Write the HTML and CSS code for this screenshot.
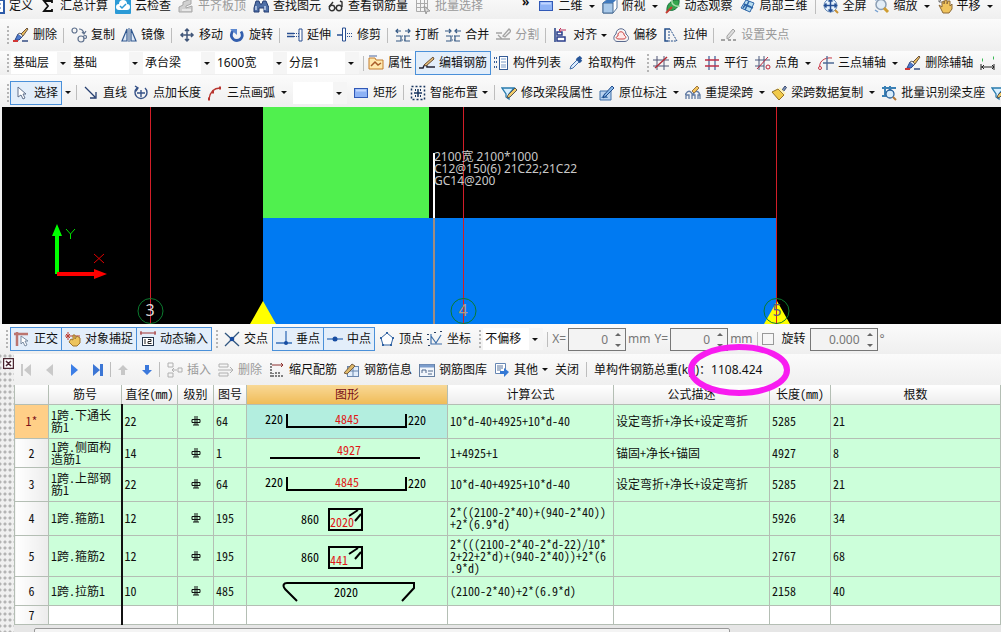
FILE: index.html
```html
<!DOCTYPE html>
<html lang="zh-CN">
<head>
<meta charset="utf-8">
<title>钢筋编辑</title>
<link rel="stylesheet" href="styles.css">
</head>
<body>
<svg class="sprite" aria-hidden="true">
  <symbol id="doc" viewBox="0 0 16 16"><rect x="2" y="2" width="13" height="13" fill="#fff" stroke="#2c5aa8" stroke-width="2"/><path d="M5 6h7M5 10h7" stroke="#2c5aa8"/></symbol>
  <symbol id="sigma" viewBox="0 0 16 16"><path d="M12 5V3H4l4 5-4 5h8v-2" fill="none" stroke="#111" stroke-width="1.8"/></symbol>
  <symbol id="cloud" viewBox="0 0 16 16"><rect width="16" height="16" rx="1" fill="#2b9ad6"/><path d="M4 12a3 3 0 0 1 0-6 4 4 0 0 1 8 0 3 3 0 0 1 0 6z" fill="#fff"/><path d="M5 8l2 2 4-4" fill="none" stroke="#2b9ad6" stroke-width="1.5"/></symbol>
  <symbol id="slab" viewBox="0 0 16 16"><path d="M1 14V9l4-2V4l8-3v5l-5 2v2l6-2v6z" fill="#d0d0d0" stroke="#a6a6a6"/><path d="M4 12h9" stroke="#fff"/></symbol>
  <symbol id="bino" viewBox="0 0 16 16"><path d="M3 3h3l1 3h2l1-3h3l3 7v4h-5v-4H6v4H1v-4z" fill="#4f6fa6" stroke="#243d73"/><path d="M3 8v4M12 8v4" stroke="#c4d4ee" stroke-width="1.5"/></symbol>
  <symbol id="glasses" viewBox="0 0 16 16"><g fill="none" stroke="#333" stroke-width="1.4"><circle cx="4" cy="10" r="2.7"/><circle cx="11" cy="10" r="2.7"/><path d="M1 9l4-5M14 9V4l-2-1M7 10h1"/></g></symbol>
  <symbol id="batch" viewBox="0 0 16 16"><g fill="none" stroke="#ababab"><path d="M1.500 1.500h11v12h-11zM1 5.500h12M1 9.500h12M5.500 1v12M9.500 1v12"/></g><path d="M9 8l6 5-3 .3-1 2.700z" fill="#ddd" stroke="#999"/></symbol>
  <symbol id="rect" viewBox="0 0 16 16"><rect x="1.500" y="3.500" width="13" height="9" fill="#8eb2f5" stroke="#3159b7"/><path d="M3 5.500h10" stroke="#c2d6ff" stroke-width="2"/></symbol>
  <symbol id="cube" viewBox="0 0 16 16"><path d="M1 5l5-4h9v9l-4 5H1z" fill="#fff" stroke="#52749c"/><path d="M1 5h10v10H1z" fill="#a9c9e9" stroke="#456990"/><path d="M1 5l5-4h9l-4 4z" fill="#3f79bd"/></symbol>
  <symbol id="orbit" viewBox="0 0 16 16"><path d="M2 13C1 6 7 1 14 2c1 6-4 12-10 10z" fill="#35a64d" stroke="#17723c"/><path d="M7 2c-1 4 3 7 8 6" fill="none" stroke="#aadfae" stroke-width="1.5"/><path d="M1 15l6-6" stroke="#c33b32" stroke-width="2"/></symbol>
  <symbol id="local3d" viewBox="0 0 16 16"><path d="M1 10l5-8 8 3-4 9z" fill="#b7dcef" stroke="#2e65a7"/><path d="M4 6l7 3M9 3l-4 9M3 10l2-3 8 3" fill="none" stroke="#2e65a7" stroke-width="1.5"/></symbol>
  <symbol id="full" viewBox="0 0 16 16"><circle cx="7.500" cy="7.500" r="6.500" fill="#e5f1fc" stroke="#6a8db9"/><path d="M7.500 1v13M1 7.500h13M5.500 3.500l2-2 2 2M5.500 11.500l2 2 2-2M3.500 5.500l-2 2 2 2M11.500 5.500l2 2-2 2" fill="none" stroke="#244e94" stroke-width="1.5"/><path d="M12 12l3 3" stroke="#c99235" stroke-width="2"/></symbol>
  <symbol id="zoom" viewBox="0 0 16 16"><circle cx="7" cy="6.500" r="5" fill="#e2edf7" stroke="#8b9eb4" stroke-width="1.500"/><path d="M10 10l4 4" stroke="#cf9d31" stroke-width="3"/><path d="M1 2l3-1M1 12l3 2" stroke="#76a1d2" stroke-width="1.500"/></symbol>
  <symbol id="hand" viewBox="0 0 16 16"><path d="M2 7l3 2V4l2-1v3l1-4h2v4l1-3h2v5l2-2v5l-3 4H6z" fill="#efc35c" stroke="#8c6937"/><path d="M2 4l3-3M2 1v3h3" fill="none" stroke="#777"/></symbol>
  <symbol id="brush" viewBox="0 0 16 16"><path d="M14 1l1 1-5 7-2-2z" fill="#e8ba5b" stroke="#6d5640"/><path d="M5 7l4 3-3 3H2z" fill="#4f7ccd" stroke="#284487"/><path d="M5 7l2-1 3 3-1 1" fill="#eee" stroke="#666"/><path d="M0 14h5" stroke="#d13636" stroke-width="2"/><path d="M9 14h6" stroke="#354c83" stroke-width="1.5"/></symbol>
  <symbol id="copy" viewBox="0 0 16 16"><g fill="none" stroke="#61738f" stroke-width="1.2"><circle cx="3.500" cy="3.500" r="2.500"/><circle cx="10" cy="12" r="3"/><circle cx="14" cy="10" r="1.500"/><path d="M8 2c3 0 4 1 5 4m-2-1l2 2 2-3"/></g></symbol>
  <symbol id="mirror" viewBox="0 0 16 16"><path d="M6 2v12H1zM10 2v12h5z" fill="#dfe9f6" stroke="#31588f" stroke-width="1.200"/><path d="M8 1v14" stroke="#31588f"/></symbol>
  <symbol id="move" viewBox="0 0 16 16"><path d="M8 2v12M2 8h12M6 4l2-2 2 2M6 12l2 2 2-2M4 6L2 8l2 2M12 6l2 2-2 2" fill="none" stroke="#405679" stroke-width="1.500"/></symbol>
  <symbol id="rotate" viewBox="0 0 16 16"><path d="M4 3.500C0 9 4 13.500 8 13.500S15 9 12 4.500" fill="none" stroke="#345fae" stroke-width="2.800"/><path d="M1 2h7v6z" fill="#5d89d0"/></symbol>
  <symbol id="extend" viewBox="0 0 16 16"><path d="M0 6.500h7M0 9.500h7" stroke="#294f91" stroke-width="1.500"/><path d="M7 6.500h5M7 9.500h5" stroke="#294f91" stroke-dasharray="1 1"/><path d="M12 2h3v12h-3z" fill="#fff" stroke="#294f91"/></symbol>
  <symbol id="trim" viewBox="0 0 16 16"><path d="M0 8h5" stroke="#294f91" stroke-width="1.500"/><path d="M10 6.500h6M10 9.500h6" stroke="#294f91" stroke-dasharray="1 1"/><path d="M5.500 1v13h3V1z" fill="#fff" stroke="#294f91"/></symbol>
  <symbol id="break" viewBox="0 0 16 16"><path d="M1 4h5M10 4h5M3 2L1 4l2 2M13 2l2 2-2 2M1 9h5v5H1M15 9h-5v5h5" fill="none" stroke="#355984" stroke-width="1.200"/><path d="M7 9h3M7 13h3" stroke="#355984" stroke-dasharray="1 1"/></symbol>
  <symbol id="join" viewBox="0 0 16 16"><path d="M0 4h5M11 4h5M4 2l2 2-2 2M12 2l-2 2 2 2M1 9h5v5H1M15 9h-5v5h5" fill="none" stroke="#355984" stroke-width="1.200"/><path d="M7 9h3M7 13h3" stroke="#355984" stroke-dasharray="1 1"/></symbol>
  <symbol id="split" viewBox="0 0 16 16"><path d="M1 6h6M1 12h14M3 8l4 4M8 9l6-7 2 2-6 6z" fill="none" stroke="#a4a4a4" stroke-width="1.300"/></symbol>
  <symbol id="align" viewBox="0 0 16 16"><path d="M2 1v14" stroke="#233f84" stroke-width="1.500"/><path d="M4 5h5v3H4zM4 10h8v4H4z" fill="#fff" stroke="#293d8b" stroke-width="1.500"/><path d="M13 3H6m2-2L6 3l2 2" fill="none" stroke="#bd2d58"/></symbol>
  <symbol id="offset" viewBox="0 0 16 16"><path d="M5 9V7c1-3 5-3 6 0v1c3 2 2 4-1 4H6c-3 0-4-2-1-3z" fill="#ffe9e9" stroke="#c44"/><path d="M3 7c0-7 10-7 10 0 4 3 3 7-1 7.500H4C0 14 0 9 3 7z" fill="none" stroke="#59698e"/></symbol>
  <symbol id="stretch" viewBox="0 0 16 16"><path d="M7 2H2v12h3" fill="none" stroke="#254f8a" stroke-width="1.500"/><path d="M7 2l7 12H5M6 4v9" fill="none" stroke="#254f8a" stroke-dasharray="2 1"/></symbol>
  <symbol id="gripset" viewBox="0 0 16 16"><path d="M6 9l6-7 2 2-6 7-2 1z" fill="#ddd" stroke="#a2a2a2"/><path d="M0 13h4M7 13h3M12 13h3" stroke="#a2a2a2" stroke-width="2"/></symbol>
  <symbol id="prop" viewBox="0 0 16 16"><path d="M1 3h6l1 2h7v9H1z" fill="#ffe9ae" stroke="#c37d2f"/><path d="M3 11l4-4 3 3 3-2" fill="none" stroke="#a95c2a" stroke-width="1.500"/><path d="M1 1h8" stroke="#4a679d"/></symbol>
  <symbol id="editbar" viewBox="0 0 16 16"><path d="M0 13h4c1-4 4-4 4-1h8" fill="none" stroke="#223" stroke-width="1.500"/><path d="M5 10l9-8 1 2-8 7z" fill="#e6be76" stroke="#654c35"/></symbol>
  <symbol id="list" viewBox="0 0 16 16"><path d="M1 3h3M1 7h3M1 12h3" stroke="#345b96" stroke-width="2" stroke-dasharray="1 1"/><rect x="6.500" y="1.500" width="8" height="13" fill="#fff" stroke="#345b96"/><path d="M8 4h5M8 7h5M8 10h5M8 12h5" stroke="#7699c7"/></symbol>
  <symbol id="dropper" viewBox="0 0 16 16"><path d="M3 11l7-7 2 2-7 7-3 1z" fill="#dcecff" stroke="#4470a9"/><path d="M9 3l4 4M11 4l2-2" stroke="#285699" stroke-width="3.500"/></symbol>
  <symbol id="twopt" viewBox="0 0 16 16"><path d="M4 1v14M11 1v14M0 5h16M0 11h16" stroke="#4f5574"/><path d="M2 13L14 2" stroke="#b32d38" stroke-width="1.500"/></symbol>
  <symbol id="parallel" viewBox="0 0 16 16"><path d="M5 1v14M11 1v14" stroke="#4a649b" stroke-width="1.300"/><path d="M1 5h14M1 11h14" stroke="#bd2e47" stroke-width="1.300"/></symbol>
  <symbol id="angle" viewBox="0 0 16 16"><path d="M4 1v14M9 1v14M0 5h15M0 11h9" stroke="#4a587c"/><path d="M2 14L13 2" stroke="#bb263b"/><circle cx="13" cy="12" r="2" fill="none" stroke="#bb263b"/></symbol>
  <symbol id="arcaxis" viewBox="0 0 16 16"><path d="M2 14C0 7 6 2 14 3" fill="none" stroke="#c73745"/><circle cx="2" cy="13" r="1.500" fill="#fff" stroke="#c73745"/><path d="M9 1v14M5 8h11" stroke="#4d6995" stroke-width="1.300"/></symbol>
  <symbol id="dim" viewBox="0 0 16 16"><path d="M1 9v6M14 9v6M1 12h13M4 10l-2 2 2 2M12 10l2 2-2 2" fill="none" stroke="#222"/><path d="M2 5h1M13 3h1" stroke="#3bbb55" stroke-width="3"/></symbol>
  <symbol id="cursor" viewBox="0 0 16 16"><path d="M4 2v10l3-2 2 4 2-1-2-4h3z" fill="#fff" stroke="#60718d"/></symbol>
  <symbol id="line" viewBox="0 0 16 16"><path d="M2 2l10 10M13 7v6H7" fill="none" stroke="#263f70" stroke-width="1.300"/></symbol>
  <symbol id="ptlen" viewBox="0 0 16 16"><path d="M4 3a6 6 0 1 0 8 0M8 5v7M4 8h8M2 1l3 2-2 3" fill="none" stroke="#355187" stroke-width="1.400"/></symbol>
  <symbol id="arc" viewBox="0 0 16 16"><path d="M2 14C3 8 6 3 13 3" fill="none" stroke="#b8352f" stroke-width="1.300"/><path d="M1 14h2M5 7h2M12 3h2" stroke="#b8352f" stroke-width="3"/></symbol>
  <symbol id="smart" viewBox="0 0 16 16"><rect x="1.500" y="1.500" width="13" height="13" fill="none" stroke="#193660" stroke-width="1.500" stroke-dasharray="2 2"/><path d="M8 4v8M4 8h8" stroke="#193660" stroke-width="1.500"/><path d="M5 5h1M10 5h1M5 11h1M10 11h1" stroke="#193660" stroke-width="2"/></symbol>
  <symbol id="modprop" viewBox="0 0 16 16"><path d="M1 3h12l-5 6v5l-3-2V9z" fill="#d6efff" stroke="#287bad" stroke-width="1.300"/><path d="M7 10l7-7 2 2-7 7-3 1z" fill="#f1cb68" stroke="#555"/></symbol>
  <symbol id="origin" viewBox="0 0 16 16"><path d="M1 6h11v9H1z" fill="#b9d2ee" stroke="#3e70ab"/><path d="M2 13l4-5 3 5" fill="#477db7"/><path d="M5 10l8-9 2 2-8 8-3 2z" fill="#89b9e9" stroke="#1f4a89"/></symbol>
  <symbol id="respan" viewBox="0 0 16 16"><path d="M1 14v-4h3v4M7 14v-4h3v4M13 14v-4h2v4M0 10c3-5 5-5 8 0M8 10c2-5 5-5 7 0" fill="none" stroke="#617ba4" stroke-width="1.300"/><path d="M7 6l5-5 2 2-5 5z" fill="#f4c55e" stroke="#9d7640"/></symbol>
  <symbol id="paint" viewBox="0 0 16 16"><path d="M11 5l3-4 1.500 1.500-3 4z" fill="#7c93ba" stroke="#3c4b6e"/><path d="M7 4l6 6-5 5-7-8z" fill="#f1ca4a" stroke="#947021"/><path d="M8 3l6 6" stroke="#fff3b4" stroke-width="2"/></symbol>
  <symbol id="recog" viewBox="0 0 16 16"><path d="M1 3h14M3 7h10M4 1v10M9 1v5M1 11h5" stroke="#3b81b6" stroke-width="2"/><circle cx="9" cy="9" r="4" fill="#d7ecfb" stroke="#28619c" stroke-width="1.300"/><path d="M12 12l3 3" stroke="#b17737" stroke-width="2"/></symbol>
  <symbol id="ortho" viewBox="0 0 16 16"><path d="M0 3h14M3 1v14" stroke="#bb7570" stroke-width="2.500"/><path d="M7 5v8l2-2 2 4 2-1-2-4h3z" fill="#fff" stroke="#7a8ca2"/></symbol>
  <symbol id="snap" viewBox="0 0 16 16"><path d="M0 5h15M3 1v8M1 3l4 4M5 3L1 7" stroke="#bd3c32"/><path d="M6 8l2 1V4h2v4l2-3 3 2v5l-3 3H8l-4-4z" fill="#edc45d" stroke="#9f742e"/></symbol>
  <symbol id="dynin" viewBox="0 0 16 16"><path d="M0 2h16M1 0v4M15 0v4" stroke="#a43434"/><rect x="2.500" y="6.500" width="11" height="8" fill="#fff" stroke="#26364c"/><path d="M5 8v5M8 8.500h3v2H8v2h3.500" fill="none" stroke="#222"/></symbol>
  <symbol id="cross" viewBox="0 0 16 16"><path d="M1 2l14 13M15 1L1 15" stroke="#31567f" stroke-width="1.300"/><circle cx="8" cy="8" r="2.300" fill="#164aa0"/></symbol>
  <symbol id="perp" viewBox="0 0 16 16"><path d="M10 0v12M0 12h16" stroke="#3970b9" stroke-width="1.300"/><circle cx="10" cy="12" r="2" fill="#174da2"/></symbol>
  <symbol id="mid" viewBox="0 0 16 16"><path d="M0 8h16" stroke="#3970b9" stroke-width="1.300"/><circle cx="8" cy="8" r="2.500" fill="#174da2"/></symbol>
  <symbol id="vertex" viewBox="0 0 16 16"><path d="M8 2l6 5-2 7H4L2 7z" fill="#fff" stroke="#3163a3"/><path d="M7 2h2M1 7h2M13 7h2M3 14h2M11 14h2" stroke="#3163a3" stroke-width="2"/></symbol>
  <symbol id="coord" viewBox="0 0 16 16"><path d="M4 3v10h11M4 5l5 7 5-8" fill="none" stroke="#3e6fa9" stroke-width="1.200"/><path d="M1 3v1M1 8v1M2 14v1M8 1v1M14 0v1" stroke="#263d60" stroke-width="2"/></symbol>
  <symbol id="first" viewBox="0 0 16 16"><path d="M3 2h2v12H3zM13 2v12L6 8z" fill="#c9c9c9"/></symbol>
  <symbol id="prev" viewBox="0 0 16 16"><path d="M11 2v12L4 8z" fill="#c9c9c9"/></symbol>
  <symbol id="next" viewBox="0 0 16 16"><path d="M5 2v12l7-6z" fill="#3c7ee6"/></symbol>
  <symbol id="last" viewBox="0 0 16 16"><path d="M3 2v12l7-6zM10 2h3v12h-3z" fill="#3c76d5"/></symbol>
  <symbol id="up" viewBox="0 0 16 16"><path d="M8 3l5 5h-3v5H6V8H3z" fill="#c7c7c7"/></symbol>
  <symbol id="down" viewBox="0 0 16 16"><path d="M8 13L3 8h3V3h4v5h3z" fill="#3b78db"/></symbol>
  <symbol id="insert" viewBox="0 0 16 16"><path d="M1 1h5v4H1zM1 11h5v4H1zM11 6h4v4h-4zM5 8h5M7 6L5 8l2 2" fill="none" stroke="#b0b0b0"/></symbol>
  <symbol id="remove" viewBox="0 0 16 16"><path d="M1 2h9v3H1zM1 11h9v3H1zM0 8h15M12 5l3 3-3 3" fill="none" stroke="#b0b0b0"/></symbol>
  <symbol id="scale" viewBox="0 0 16 16"><path d="M2 1v14M4 15v-4M7 15V9M10 15v-5M13 15v-3" stroke="#333" stroke-width="1.200" stroke-dasharray="2 1"/><path d="M3 3h11M12 1l2 2-2 2" fill="none" stroke="#8d302e"/></symbol>
  <symbol id="info" viewBox="0 0 16 16"><rect x="3.500" y="4.500" width="11" height="10" fill="#e2eefb" stroke="#6986ad"/><path d="M4 9h10M9 5v9" stroke="#6986ad"/><path d="M0 11l8-9 3 2-8 8z" fill="#dfb96a" stroke="#755d3f"/></symbol>
  <symbol id="lib" viewBox="0 0 16 16"><rect x=".5" y="2.500" width="15" height="12" fill="#f2f6fb" stroke="#657fa1"/><path d="M1 4h14" stroke="#7c9dcc" stroke-width="3"/><path d="M3 11V8h4v3M9 9h5M9 12h4" fill="none" stroke="#50688c"/></symbol>
  <symbol id="other" viewBox="0 0 16 16"><path d="M1.500 1.500h10v10h-10z" fill="#fff" stroke="#6686b3"/><path d="M3 4h6M3 6h6M3 8h4" stroke="#58749d"/><path d="M6 9h4V6l5 4-5 5v-3H6z" fill="#3478d4"/></symbol>
  <symbol id="grade" viewBox="0 0 10 10"><path d="M1 3.500h8v3H1zM4 0v9M6 0v9M2 9h6" fill="none" stroke="#111"/></symbol>
</svg>

<header class="toolbars">
  <div class="bar bar-top">
    <button class="tool"><svg><use href="#doc"/></svg>定义</button>
    <button class="tool"><svg><use href="#sigma"/></svg>汇总计算</button>
    <button class="tool"><svg><use href="#cloud"/></svg>云检查</button>
    <button class="tool off"><svg><use href="#slab"/></svg>平齐板顶</button>
    <button class="tool"><svg><use href="#bino"/></svg>查找图元</button>
    <button class="tool"><svg><use href="#glasses"/></svg>查看钢筋量</button>
    <button class="tool off"><svg><use href="#batch"/></svg>批量选择</button>
    <button class="tool more">»</button>
    <button class="tool drop"><svg><use href="#rect"/></svg>二维</button>
    <button class="tool drop"><svg><use href="#cube"/></svg>俯视</button>
    <button class="tool"><svg><use href="#orbit"/></svg>动态观察</button>
    <button class="tool"><svg><use href="#local3d"/></svg>局部三维</button>
    <i class="sep"></i>
    <button class="tool"><svg><use href="#full"/></svg>全屏</button>
    <button class="tool drop"><svg><use href="#zoom"/></svg>缩放</button>
    <button class="tool drop"><svg><use href="#hand"/></svg>平移</button>
    <button class="tool" aria-label="视图"><svg><use href="#rect"/></svg></button>
  </div>
  <div class="bar bar-edit">
    <i class="grip"></i>
    <button class="tool"><svg><use href="#brush"/></svg>删除</button>
    <i class="sep"></i>
    <button class="tool"><svg><use href="#copy"/></svg>复制</button>
    <button class="tool"><svg><use href="#mirror"/></svg>镜像</button>
    <i class="sep"></i>
    <button class="tool"><svg><use href="#move"/></svg>移动</button>
    <button class="tool"><svg><use href="#rotate"/></svg>旋转</button>
    <i class="sep"></i>
    <button class="tool"><svg><use href="#extend"/></svg>延伸</button>
    <button class="tool"><svg><use href="#trim"/></svg>修剪</button>
    <i class="sep"></i>
    <button class="tool"><svg><use href="#break"/></svg>打断</button>
    <button class="tool"><svg><use href="#join"/></svg>合并</button>
    <button class="tool off"><svg><use href="#split"/></svg>分割</button>
    <i class="sep"></i>
    <button class="tool drop near"><svg><use href="#align"/></svg>对齐</button>
    <button class="tool"><svg><use href="#offset"/></svg>偏移</button>
    <button class="tool"><svg><use href="#stretch"/></svg>拉伸</button>
    <i class="sep"></i>
    <button class="tool off"><svg><use href="#gripset"/></svg>设置夹点</button>
  </div>
  <div class="bar bar-member">
    <i class="grip"></i>
    <div class="combos">
      <span class="combo short"><select aria-label="楼层"><option>基础层</option></select></span>
      <span class="combo"><select aria-label="构件分类"><option>基础</option></select></span>
      <span class="combo"><select aria-label="构件类型"><option>承台梁</option></select></span>
      <span class="combo"><select aria-label="构件"><option>1600宽</option></select></span>
      <span class="combo"><select aria-label="分层"><option>分层1</option></select></span>
    </div>
    <i class="sep"></i>
    <button class="tool"><svg><use href="#prop"/></svg>属性</button>
    <button class="tool on"><svg><use href="#editbar"/></svg>编辑钢筋</button>
    <button class="tool"><svg><use href="#list"/></svg>构件列表</button>
    <button class="tool"><svg><use href="#dropper"/></svg>拾取构件</button>
    <i class="grip spaced"></i>
    <button class="tool"><svg><use href="#twopt"/></svg>两点</button>
    <button class="tool"><svg><use href="#parallel"/></svg>平行</button>
    <button class="tool drop"><svg><use href="#angle"/></svg>点角</button>
    <button class="tool drop"><svg><use href="#arcaxis"/></svg>三点辅轴</button>
    <button class="tool"><svg><use href="#brush"/></svg>删除辅轴</button>
    <button class="tool" aria-label="标注"><svg><use href="#dim"/></svg></button>
  </div>
  <div class="bar bar-draw">
    <i class="grip"></i>
    <button class="tool on drop"><svg><use href="#cursor"/></svg>选择</button>
    <i class="sep"></i>
    <button class="tool"><svg><use href="#line"/></svg>直线</button>
    <button class="tool"><svg><use href="#ptlen"/></svg>点加长度</button>
    <button class="tool drop"><svg><use href="#arc"/></svg>三点画弧</button>
    <span class="combo slim"><select aria-label="画法"><option></option></select></span>
    <button class="tool"><svg><use href="#rect"/></svg>矩形</button>
    <i class="sep"></i>
    <button class="tool drop near"><svg><use href="#smart"/></svg>智能布置</button>
    <i class="sep"></i>
    <button class="tool"><svg><use href="#modprop"/></svg>修改梁段属性</button>
    <button class="tool drop"><svg><use href="#origin"/></svg>原位标注</button>
    <button class="tool drop"><svg><use href="#respan"/></svg>重提梁跨</button>
    <button class="tool drop"><svg><use href="#paint"/></svg>梁跨数据复制</button>
    <button class="tool"><svg><use href="#recog"/></svg>批量识别梁支座</button>
    <button class="tool" aria-label="过滤"><svg><use href="#modprop"/></svg></button>
  </div>
</header>

<main>
  <svg class="view" role="img" aria-label="梁平面图">
    <rect x="261" y="0" width="166" height="111" fill="#50f04e"/>
    <rect x="261" y="111" width="514" height="106" fill="#007af2"/>
    <path d="M261 194l13 23h-26zM775 194l13 23h-26z" fill="#ff0"/>
    <path d="M148.500 0v217M461.500 0v217M774.500 0v217" stroke="#d21e28"/>
    <path d="M432 46v65" stroke="#fff" stroke-width="2"/>
    <path d="M432 111v106" stroke="#a08c80" stroke-width="2"/>
    <g fill="none" stroke="#0b7a2e"><circle cx="148.500" cy="204" r="12.500"/><circle cx="461.500" cy="204" r="12.500"/><circle cx="774.500" cy="204" r="12.500"/></g>
    <g class="axis"><text x="148" y="209" fill="#ddd">3</text><text x="461" y="209" fill="#b09a84">4</text><text x="775" y="209" fill="#5a5f80">5</text></g>
    <g class="note"><text x="432" y="54">2100宽 2100*1000</text><text x="432" y="66">C12@150(6) 21C22;21C22</text><text x="432" y="78">GC14@200</text></g>
    <path d="M53 167h4v-38h3l-5-12-5 12h3z" fill="#0f0"/>
    <path d="M55 165h37v-3l13 5-13 5v-3H55z" fill="#f00"/>
    <path d="M64 122l4.500 5 4.500-5M68.500 127v5" fill="none" stroke="#0d0"/>
    <path d="M92 147l10 9M102 147l-10 9" stroke="#d00"/>
  </svg>

  <div class="bar bar-snap">
    <i class="grip"></i>
    <div class="joined">
      <button class="tool on"><svg><use href="#ortho"/></svg>正交</button>
      <button class="tool on"><svg><use href="#snap"/></svg>对象捕捉</button>
      <button class="tool on"><svg><use href="#dynin"/></svg>动态输入</button>
    </div>
    <i class="grip"></i>
    <button class="tool"><svg><use href="#cross"/></svg>交点</button>
    <div class="joined">
      <button class="tool on"><svg><use href="#perp"/></svg>垂点</button>
      <button class="tool on"><svg><use href="#mid"/></svg>中点</button>
    </div>
    <button class="tool"><svg><use href="#vertex"/></svg>顶点</button>
    <button class="tool"><svg><use href="#coord"/></svg>坐标</button>
    <i class="grip spaced"></i>
    <span class="combo short"><select aria-label="偏移方式"><option>不偏移</option></select></span>
    <i class="sep"></i>
    <label class="field">X=<span class="spin"><input type="text" value="0" disabled></span>mm</label>
    <label class="field">Y=<span class="spin"><input type="text" value="0" disabled></span>mm</label>
    <i class="sep"></i>
    <label class="check"><input type="checkbox">旋转</label>
    <label class="field"><span class="spin wide"><input type="text" value="0.000" aria-label="旋转角度" disabled></span>°</label>
  </div>

  <section class="panel">
    <aside class="dock"><button class="close" aria-label="关闭面板"><svg viewBox="0 0 11 11"><path d="M.5.5h10v10H.5zM3 3l5 5M8 3L3 8" fill="#fff" stroke="#4a2530" stroke-width="1.500"/></svg></button></aside>
    <div class="sheet">
      <div class="bar bar-rebar">
        <div class="joined">
          <button class="nav" aria-label="首条"><svg><use href="#first"/></svg></button>
          <button class="nav" aria-label="上一条"><svg><use href="#prev"/></svg></button>
          <button class="nav" aria-label="下一条"><svg><use href="#next"/></svg></button>
          <button class="nav" aria-label="末条"><svg><use href="#last"/></svg></button>
          <i class="sep"></i>
          <button class="nav" aria-label="上移"><svg><use href="#up"/></svg></button>
          <button class="nav" aria-label="下移"><svg><use href="#down"/></svg></button>
          <i class="sep"></i>
        </div>
        <button class="tool off"><svg><use href="#insert"/></svg>插入</button>
        <button class="tool off"><svg><use href="#remove"/></svg>删除</button>
        <button class="tool"><svg><use href="#scale"/></svg>缩尺配筋</button>
        <button class="tool"><svg><use href="#info"/></svg>钢筋信息</button>
        <button class="tool"><svg><use href="#lib"/></svg>钢筋图库</button>
        <button class="tool drop near"><svg><use href="#other"/></svg>其他</button>
        <button class="tool">关闭</button>
        <i class="sep"></i>
        <span class="total">单构件钢筋总重(kg)：<b>1108.424<svg class="ring"><ellipse cx="51" cy="26" rx="48" ry="23"/></svg></b></span>
      </div>
      <table>
        <colgroup><col class="c-no"><col class="c-name"><col class="c-dia"><col class="c-grade"><col class="c-fig"><col class="c-shape"><col class="c-formula"><col class="c-desc"><col class="c-len"><col></colgroup>
        <thead><tr><th></th><th>筋号</th><th>直径(mm)</th><th>级别</th><th>图号</th><th class="sel">图形</th><th>计算公式</th><th>公式描述</th><th>长度(mm)</th><th>根数</th></tr></thead>
        <tbody>
          <tr class="r34"><th class="cur">1*</th><td>1跨.下通长筋1</td><td>22</td><td class="grade"><svg><use href="#grade"/></svg></td><td>64</td><td class="fig sel"><svg><path d="M40 9v13h119V9"/><text x="18" y="19">220</text><text class="red" x="88" y="19">4845</text><text x="161" y="20">220</text></svg></td><td>10*d-40+4925+10*d-40</td><td>设定弯折+净长+设定弯折</td><td>5285</td><td>21</td></tr>
          <tr class="r29"><th>2</th><td>1跨.侧面构造筋1</td><td>14</td><td class="grade"><svg><use href="#grade"/></svg></td><td>1</td><td class="fig"><svg><path d="M23 19h150"/><text class="red" x="90" y="16">4927</text></svg></td><td>1+4925+1</td><td>锚固+净长+锚固</td><td>4927</td><td>8</td></tr>
          <tr class="r34"><th>3</th><td>1跨.上部钢筋1</td><td>22</td><td class="grade"><svg><use href="#grade"/></svg></td><td>64</td><td class="fig"><svg><path d="M40 9v13h119V9"/><text x="18" y="19">220</text><text class="red" x="88" y="19">4845</text><text x="161" y="20">220</text></svg></td><td>10*d-40+4925+10*d-40</td><td>设定弯折+净长+设定弯折</td><td>5285</td><td>21</td></tr>
          <tr class="r34"><th>4</th><td>1跨.箍筋1</td><td>12</td><td class="grade"><svg><use href="#grade"/></svg></td><td>195</td><td class="fig"><svg><path d="M82 7h33v21H82zM102 14l9-6M108 19l6-7"/><text x="54" y="22">860</text><text class="red" x="83" y="25">2020</text></svg></td><td>2*((2100-2*40)+(940-2*40))+2*(6.9*d)</td><td></td><td>5926</td><td>34</td></tr>
          <tr class="r41"><th>5</th><td>1跨.箍筋2</td><td>12</td><td class="grade"><svg><use href="#grade"/></svg></td><td>195</td><td class="fig"><svg><path d="M82 11h33v21H82zM102 18l9-6M108 23l6-7"/><text x="54" y="26">860</text><text class="red" x="83" y="29">441</text></svg></td><td>2*(((2100-2*40-2*d-22)/10*2+22+2*d)+(940-2*40))+2*(6.9*d)</td><td></td><td>2767</td><td>68</td></tr>
          <tr class="r29"><th>6</th><td>1跨.拉筋1</td><td>10</td><td class="grade"><svg><use href="#grade"/></svg></td><td>485</td><td class="fig"><svg><path d="M50 24L38 12c-3-4-1-6 2-6h127v5l-12 13"/><text x="87" y="20">2020</text></svg></td><td>(2100-2*40)+2*(6.9*d)</td><td></td><td>2158</td><td>40</td></tr>
          <tr class="r19 blank"><th>7</th><td></td><td></td><td></td><td></td><td></td><td></td><td></td><td></td><td></td></tr>
        </tbody>
      </table>
      <div class="scroll"><div class="thumb"></div></div>
    </div>
  </section>
</main>
</body>
</html>
```
FILE: styles.css
```css
* { box-sizing: border-box; }

body {
  margin: 0;
  overflow: hidden;
  background: #f0f0f0;
  color: #111;
  font: 12px/16px "Noto Sans", "Noto Sans CJK SC", sans-serif;
}

button, select, input { font: inherit; color: inherit; }
.sprite { display: none; }

/* toolbars */
.bar {
  display: flex;
  align-items: center;
  gap: 7px;
  white-space: nowrap;
  overflow: hidden;
  background: linear-gradient(#fbfbfb, #efefef);
}
.bar > * { flex: none; }
.bar-top { height: 26px; margin-top: -7px; margin-left: -11px; }
.bar-edit { height: 32px; padding-left: 7px; gap: 6px; }
.bar-member { height: 24px; padding-left: 7px; gap: 4px; }
.bar-draw { height: 32px; padding: 3px 0 0 7px; gap: 6px; }
.bar-snap { height: 30px; padding-left: 6px; gap: 4px; }
.bar-rebar { height: 31px; overflow: visible; }

.tool {
  display: flex;
  align-items: center;
  gap: 4px;
  height: 24px;
  padding: 0;
  border: 0;
  background: none;
}
.tool svg, .nav svg { width: 16px; height: 16px; flex: none; }
.tool.off { color: #9a9a9a; }
.tool.on {
  padding: 0 3px;
  border: 1px solid #4a90d9;
  background: #e3eefa;
}
.tool.more { margin: 0 2px 0 32px; font-weight: bold; height: 24px; align-items: flex-start; }
.bar-member .tool { padding-right: 3px; }
.bar-member .on { margin: 0 -2px 0 -4px; }

.drop::after, .combo::after {
  content: "";
  border: 3px solid transparent;
  border-top-color: #111;
  border-bottom: 0;
}
.drop::after { margin-left: 2px; }
.drop.near::after { margin-left: 0; }
.on.drop { position: relative; margin-right: 8px; overflow: visible; }
.on.drop::after { position: absolute; left: 54px; margin: 0; }

.sep { width: 1px; height: 15px; background: #bdbdbd; }
.bar-edit .sep { margin-right: 1px; }
.grip {
  width: 2px;
  height: 18px;
  background: repeating-linear-gradient(#b5b5b5 0 2px, transparent 2px 4px);
}
.bar-edit .grip { margin-right: -2px; }
.bar-draw .grip { margin-right: -5px; }
.bar-snap .grip { margin-right: -2px; }
.bar-snap .joined + .grip { margin-right: 2px; }
.grip.spaced { margin-left: 4px; }
.joined, .combos { display: flex; align-items: center; }
.joined .on + .on { margin-left: -1px; }

.combo { position: relative; width: 72px; height: 22px; background: #fff; }
.combo.short { width: 60px; }
.combo.slim { width: 54px; }
.combo::after { position: absolute; right: 5px; top: 10px; }
.combo select {
  width: 100%;
  height: 22px;
  padding: 0 0 0 2px;
  border: 0;
  background: linear-gradient(90deg, transparent calc(100% - 14px), #f5f5f5 0);
  appearance: none;
}
.combos { margin-left: -2px; }

.field, .check { display: flex; align-items: center; gap: 2px; color: #777; }
.check { gap: 8px; color: #111; }
.check input { width: 12px; height: 12px; margin: 0; border: 1px solid #999; appearance: none; background: #f6f6f6; }
.spin { position: relative; width: 58px; height: 23px; }
.spin.wide { width: 68px; }
.spin input {
  width: 100%;
  height: 23px;
  padding: 0 17px 0 0;
  border: 1px solid #777;
  background: #f3f3f3;
  color: #777;
  text-align: right;
}
.spin::before, .spin::after { content: ""; position: absolute; right: 5px; border: 3px solid transparent; }
.spin::before { top: 5px; border-top: 0; border-bottom-color: #666; }
.spin::after { bottom: 4px; border-bottom: 0; border-top-color: #666; }

/* drawing view */
main { display: block; }
.view { display: block; width: calc(100% - 2px); height: 217px; margin-left: 2px; background: #000; }
.note { fill: #c8c8c8; font-size: 12px; }
.axis { font-size: 16px; text-anchor: middle; }

/* docked rebar panel */
.panel { display: flex; }
.dock {
  flex: none;
  width: 14px;
  padding: 4px 0 0 3px;
  background: #f0f0f0 radial-gradient(circle at 2px 2px, #b4b4b4 1px, transparent 2px) 3px 0 / 5px 6px;
}
.close { display: block; width: 11px; height: 11px; padding: 0; border: 0; background: #fff; }
.close svg { display: block; width: 11px; height: 11px; }
.sheet { flex: 1; min-width: 0; }
.nav { display: flex; align-items: center; justify-content: center; width: 24px; height: 24px; padding: 0; border: 0; background: none; }
.total b { position: relative; font-weight: normal; }
.ring { position: absolute; left: -23px; top: -17px; width: 102px; height: 52px; }
.ring ellipse { fill: none; stroke: #f81cf0; stroke-width: 6px; }

table {
  width: 100%;
  table-layout: fixed;
  border-collapse: collapse;
  border-left: 1px solid #a8a8a8;
  font: 12px/12px "Noto Sans CJK SC", sans-serif;
  font-feature-settings: "hwid";
}
.c-no { width: 34px; }
.c-name { width: 73px; }
.c-dia { width: 56px; }
.c-grade { width: 36px; }
.c-fig { width: 33px; }
.c-shape { width: 201px; }
.c-formula { width: 166px; }
.c-desc { width: 156px; }
.c-len { width: 61px; }
th, td { padding: 0 2px; border: 1px solid #b4beb4; border-top: 0; }
th { background: linear-gradient(90deg, #fff, #ececec); font-weight: normal; text-align: center; }
thead th { height: 19px; background: linear-gradient(#fff, #ececec); white-space: nowrap; padding: 0; }
thead th.sel { background: linear-gradient(#f8d896, #f0bc58); color: #7a1018; }
th.cur { background: #ffcf87; color: #7a1018; }
td { background: #ccffda; word-break: break-all; line-break: anywhere; }
td:nth-child(2) { border-right: 2px solid #111; }
td.fig { padding: 0; }
td.fig.sel { background: #b3eedf; }
.fig svg { display: block; width: 200px; height: 100%; }
.fig path { fill: none; stroke: #000; stroke-width: 2px; }
.fig .red { fill: #e01818; }
.grade svg { display: block; width: 10px; height: 10px; margin: 0 auto; }
.blank td { background: #fff; }
.r34 { height: 34px; }
.r34 .fig svg { height: 33px; }
.r29 { height: 29px; }
.r29 .fig svg { height: 28px; }
.r41 { height: 41px; }
.r41 .fig svg { height: 40px; }
.r19 { height: 19px; }

.scroll { height: 8px; padding: 3px 0 0 20px; background: #e6e6e6; overflow: hidden; }
.thumb { width: 72%; height: 14px; border: 1px solid #999; border-radius: 2px; background: #f4f4f4; }
```
